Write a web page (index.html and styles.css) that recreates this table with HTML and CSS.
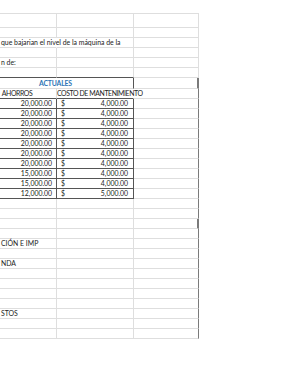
FILE: index.html
```html
<!DOCTYPE html>
<html lang="es">
<head>
<meta charset="utf-8">
<title>Hoja</title>
<link rel="stylesheet" href="styles.css">
</head>
<body>
<div class="sheet">
  <div class="row first"><div class="c"></div><div class="c"></div><div class="c"></div></div>
  <div class="row"><div class="c"></div><div class="c"></div><div class="c"></div></div>
  <div class="row"><div class="c over">que bajarian el nivel de la máquina de la</div><div class="c"></div><div class="c"></div></div>
  <div class="row"><div class="c"></div><div class="c"></div><div class="c"></div></div>
  <div class="row"><div class="c">n de:</div><div class="c"></div><div class="c"></div></div>
  <div class="row"><div class="c dk-b"></div><div class="c dk-b"></div><div class="c"></div></div>
  <div class="row tall"><div class="c span2 dk-r title">ACTUALES</div><div class="c edge thick"></div></div>
  <div class="row"><div class="c dk-b head ahorros">AHORROS</div><div class="c dk-b over head">COSTO DE MANTENIMIENTO</div><div class="c edge"></div></div>
  <div class="row data"><div class="c num">20,000.00</div><div class="c money"><span>$</span><span>4,000.00</span></div><div class="c edge"></div></div>
  <div class="row data"><div class="c num">20,000.00</div><div class="c money"><span>$</span><span>4,000.00</span></div><div class="c edge"></div></div>
  <div class="row data"><div class="c num">20,000.00</div><div class="c money"><span>$</span><span>4,000.00</span></div><div class="c edge"></div></div>
  <div class="row data"><div class="c num">20,000.00</div><div class="c money"><span>$</span><span>4,000.00</span></div><div class="c edge"></div></div>
  <div class="row data"><div class="c num">20,000.00</div><div class="c money"><span>$</span><span>4,000.00</span></div><div class="c edge"></div></div>
  <div class="row data"><div class="c num">20,000.00</div><div class="c money"><span>$</span><span>4,000.00</span></div><div class="c edge"></div></div>
  <div class="row data"><div class="c num">20,000.00</div><div class="c money"><span>$</span><span>4,000.00</span></div><div class="c edge"></div></div>
  <div class="row data"><div class="c num">15,000.00</div><div class="c money"><span>$</span><span>4,000.00</span></div><div class="c edge"></div></div>
  <div class="row data"><div class="c num">15,000.00</div><div class="c money"><span>$</span><span>4,000.00</span></div><div class="c edge"></div></div>
  <div class="row data"><div class="c num">12,000.00</div><div class="c money"><span>$</span><span>5,000.00</span></div><div class="c edge"></div></div>
  <div class="row"><div class="c"></div><div class="c"></div><div class="c edge"></div></div>
  <div class="row"><div class="c"></div><div class="c"></div><div class="c edge"></div></div>
  <div class="row"><div class="c"></div><div class="c"></div><div class="c edge thick"></div></div>
  <div class="row"><div class="c"></div><div class="c"></div><div class="c edge"></div></div>
  <div class="row"><div class="c">CIÓN E IMP</div><div class="c"></div><div class="c edge"></div></div>
  <div class="row"><div class="c"></div><div class="c"></div><div class="c edge"></div></div>
  <div class="row"><div class="c">NDA</div><div class="c"></div><div class="c edge"></div></div>
  <div class="row"><div class="c"></div><div class="c"></div><div class="c edge"></div></div>
  <div class="row"><div class="c"></div><div class="c"></div><div class="c edge"></div></div>
  <div class="row"><div class="c"></div><div class="c"></div><div class="c edge"></div></div>
  <div class="row"><div class="c"></div><div class="c"></div><div class="c edge"></div></div>
  <div class="row"><div class="c">STOS</div><div class="c"></div><div class="c edge"></div></div>
  <div class="row"><div class="c"></div><div class="c"></div><div class="c edge"></div></div>
  <div class="row"><div class="c"></div><div class="c"></div><div class="c edge"></div></div>
</div>
</body>
</html>
```
FILE: styles.css
```css
html, body {
  margin: 0;
  padding: 0;
  background: #ffffff;
}
body {
  font-family: Lato, "Liberation Sans", sans-serif;
  font-size: 6.9px;
  color: #222222;
}
.sheet {
  margin-top: 13px;
  width: 199px;
  border-top: 1px solid #dedede;
}
.row {
  display: grid;
  grid-template-columns: 57px 77px 65px;
  height: 10px;
}
.row.first { height: 14px; }
.row.tall { height: 11px; }
.c {
  box-sizing: border-box;
  border-right: 1px solid #dedede;
  border-bottom: 1px solid #dedede;
  white-space: nowrap;
  line-height: 9px;
  padding-top: 0;
  padding-left: 1px;
  overflow: visible;
  min-width: 0;
}
.over { border-right-color: transparent; }
.dk-b { border-bottom-color: #555555; }
.dk-r { border-right-color: #555555; }
.span2 { grid-column: 1 / 3; }
.edge { border-right-color: #7a7a7a; }
.edge.thick { border-right-width: 2px; }
.title {
  color: #2f75b5;
  font-weight: bold;
  text-align: center;
  padding-left: 0;
  padding-right: 22px;
  line-height: 10px;
  letter-spacing: -0.2px;
}
.head {
  padding-left: 0;
  letter-spacing: -0.4px;
}
.ahorros {
  text-align: center;
  padding-right: 22px;
}
.data .c:nth-child(1),
.data .c:nth-child(2) {
  border-bottom-color: #555555;
  border-right-color: #555555;
}
.num {
  text-align: right;
  padding-right: 4px;
}
.money {
  display: flex;
  justify-content: space-between;
  padding-left: 4px;
  padding-right: 5px;
}
```
